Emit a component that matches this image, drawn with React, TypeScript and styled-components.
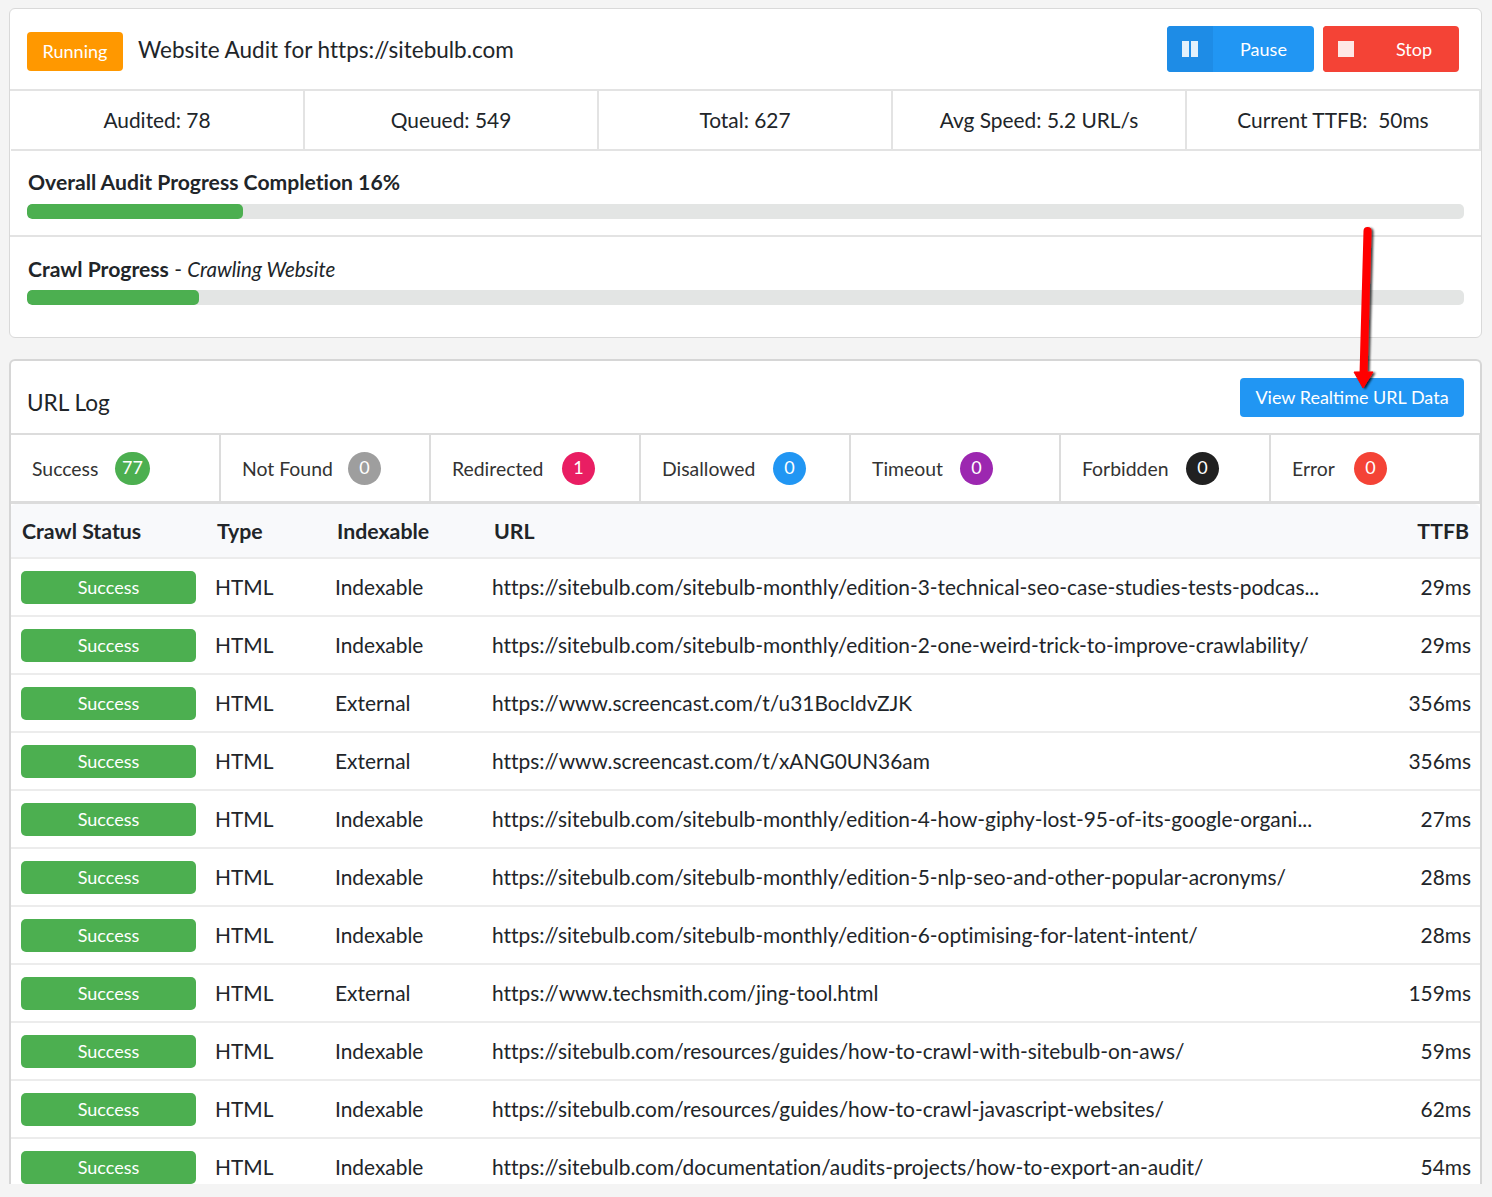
import React from "react";
import styled, { createGlobalStyle } from "styled-components";

const Global = createGlobalStyle`
    html, body {
        margin: 0;
        height: 1197px;
        overflow: hidden;
        background: #f4f4f4;
        font-family: "Lato", "Liberation Sans", sans-serif;
        font-variant-ligatures: none;
        color: #212529;
    }
    button {
        font-variant-ligatures: none;
    }
`;

const Page = styled.div`
    position: relative;
    box-sizing: border-box;
    height: 1197px;
    padding: 8px 10px 13px 9px;
    display: flex;
    flex-direction: column;
    gap: 21px;
`;

const Panel = styled.section<{ $fill?: boolean }>`
    background: #fff;
    border: 1px solid #d9d9d9;
    border-radius: 6px;
    overflow: hidden;
    ${(p) =>
        p.$fill
            ? `flex: 1; min-height: 0; border-width: 2px 2px 0 2px; border-color: #d6d6d6; border-bottom-left-radius: 0; border-bottom-right-radius: 0;`
            : `height: 330px; box-sizing: border-box; flex-shrink: 0;`}
`;

const Header = styled.header`
    height: 82px;
    box-sizing: border-box;
    padding: 0 22px 0 17px;
    display: flex;
    align-items: center;
    border-bottom: 2px solid #e3e3e3;
`;

const StatusLabel = styled.span`
    width: 96px;
    height: 39px;
    margin-top: 5px;
    padding-bottom: 2px;
    box-sizing: border-box;
    border-radius: 4px;
    background: #ff9800;
    color: #fff;
    font-size: 18px;
    display: flex;
    align-items: center;
    justify-content: center;
`;

const AuditTitle = styled.h1`
    margin: 0 0 0 15px;
    font-size: 22.5px;
    font-weight: 400;
    flex: 1;
`;

const ActionButton = styled.button<{ $bg: string; $width: number; $iconBg: string }>`
    width: ${(p) => p.$width}px;
    height: 46px;
    margin-left: 9px;
    padding: 0;
    border: 0;
    border-radius: 4px;
    overflow: hidden;
    background: ${(p) => p.$bg};
    color: #fff;
    font: 400 18px "Lato", sans-serif;
    display: flex;
    align-items: stretch;

    .icon {
        width: 46px;
        background: ${(p) => p.$iconBg};
        display: flex;
        align-items: center;
        justify-content: center;
    }

    .text {
        flex: 1;
        display: flex;
        align-items: center;
        justify-content: center;
    }
`;

const Stats = styled.div`
    display: grid;
    grid-template-columns: repeat(5, 294px);
    height: 60px;
    margin-left: 1px;
    border-bottom: 2px solid #e3e3e3;
    box-sizing: border-box;
`;

const Stat = styled.div`
    display: flex;
    align-items: center;
    justify-content: center;
    padding-bottom: 2px;
    font-size: 20.9px;
    border-right: 2px solid #e3e3e3;
`;

const Progress = styled.div<{ $divider?: boolean; $height: number; $top: number }>`
    height: ${(p) => p.$height}px;
    box-sizing: border-box;
    padding: ${(p) => p.$top}px 17px 0;
    ${(p) => p.$divider && `border-bottom: 2px solid #e3e3e3;`}
`;

const ProgressTitle = styled.div`
    font-size: 20.9px;
    line-height: 26px;
    font-weight: 400;
    padding-left: 1px;

    strong {
        font-size: 21.15px;
        font-weight: 700;
    }

    em {
        font-size: 20.5px;
        font-style: italic;
    }
`;

const Track = styled.div<{ $gap: number }>`
    height: 15px;
    margin-top: ${(p) => p.$gap}px;
    border-radius: 5px;
    background: #e3e5e4;
    overflow: hidden;
`;

const Fill = styled.div`
    height: 100%;
    border-radius: 5px;
    background: #4caf50;
`;

const LogHeader = styled.header`
    height: 74px;
    box-sizing: border-box;
    padding: 17px 16px 0 16px;
    display: flex;
    justify-content: space-between;
    align-items: flex-start;
    border-bottom: 2px solid #dcdcdc;
`;

const LogTitle = styled.h2`
    margin: 10px 0 0;
    font-size: 22.6px;
    line-height: 30px;
    font-weight: 400;
`;

const ViewButton = styled.button`
    width: 224px;
    height: 39px;
    border: 0;
    padding: 0 0 2px;
    border-radius: 4px;
    background: #2196f3;
    color: #fff;
    font: 400 18px "Lato", sans-serif;
`;

const Tabs = styled.div`
    display: grid;
    grid-template-columns: repeat(7, 210px);
    height: 69px;
    box-sizing: border-box;
    border-bottom: 3px solid #dcdcdc;
`;

const Tab = styled.div`
    display: flex;
    align-items: center;
    gap: 17px;
    padding-left: 21px;
    font-size: 19.4px;
    color: #333;
    border-right: 2px solid #dcdcdc;
`;

const TabLabel = styled.span<{ $width: number }>`
    width: ${(p) => p.$width}px;
    white-space: nowrap;
`;

const Count = styled.span<{ $bg: string; $wide?: boolean }>`
    min-width: ${(p) => (p.$wide ? 35 : 33)}px;
    height: 33px;
    border-radius: 17px;
    background: ${(p) => p.$bg};
    color: #fff;
    font-size: 18px;
    display: flex;
    align-items: center;
    justify-content: center;
    padding-bottom: 2px;
    box-sizing: border-box;
`;

const Row = styled.div`
    display: grid;
    grid-template-columns: 194px 120px 157px 1fr auto;
    align-items: center;
    height: 58px;
    box-sizing: border-box;
    padding: 0 9px 0 10px;
    font-size: 20.9px;
    border-bottom: 2px solid #ececec;
    white-space: nowrap;
`;

const HeadRow = styled(Row)`
    grid-template-columns: 195px 120px 157px 1fr auto;
    height: 55px;
    padding: 0 11px 0 12px;
    margin-left: -1px;
    background: #f8f9fb;
    font-weight: 700;
    font-size: 21.3px;
    border-radius: 6px 6px 0 0;
`;

const Cell = styled.span`
    margin-top: -2px;
`;

const Pill = styled.span`
    width: 175px;
    height: 33px;
    border-radius: 5px;
    background: #4caf50;
    color: #fff;
    font-size: 18px;
    display: flex;
    align-items: center;
    justify-content: center;
`;

const Arrow = styled.svg`
    position: absolute;
    left: 1340px;
    top: 220px;
    pointer-events: none;
`;

const tabs: [string, string, string, number][] = [
    ["Success", "77", "#4caf50", 66],
    ["Not Found", "0", "#9e9e9e", 89],
    ["Redirected", "1", "#e91e63", 93],
    ["Disallowed", "0", "#2196f3", 94],
    ["Timeout", "0", "#9c27b0", 71],
    ["Forbidden", "0", "#212121", 87],
    ["Error", "0", "#f44336", 45],
];

const rows: [string, string, string][] = [
    ["Indexable", "https://sitebulb.com/sitebulb-monthly/edition-3-technical-seo-case-studies-tests-podcas...", "29ms"],
    ["Indexable", "https://sitebulb.com/sitebulb-monthly/edition-2-one-weird-trick-to-improve-crawlability/", "29ms"],
    ["External", "https://www.screencast.com/t/u31BocIdvZJK", "356ms"],
    ["External", "https://www.screencast.com/t/xANG0UN36am", "356ms"],
    ["Indexable", "https://sitebulb.com/sitebulb-monthly/edition-4-how-giphy-lost-95-of-its-google-organi...", "27ms"],
    ["Indexable", "https://sitebulb.com/sitebulb-monthly/edition-5-nlp-seo-and-other-popular-acronyms/", "28ms"],
    ["Indexable", "https://sitebulb.com/sitebulb-monthly/edition-6-optimising-for-latent-intent/", "28ms"],
    ["External", "https://www.techsmith.com/jing-tool.html", "159ms"],
    ["Indexable", "https://sitebulb.com/resources/guides/how-to-crawl-with-sitebulb-on-aws/", "59ms"],
    ["Indexable", "https://sitebulb.com/resources/guides/how-to-crawl-javascript-websites/", "62ms"],
    ["Indexable", "https://sitebulb.com/documentation/audits-projects/how-to-export-an-audit/", "54ms"],
];

export default function App() {
    return (
        <Page>
            <Global />
            <Panel>
                <Header>
                    <StatusLabel>Running</StatusLabel>
                    <AuditTitle>Website Audit for https://sitebulb.com</AuditTitle>
                    <ActionButton $bg="#2196f3" $iconBg="#1e8ce6" $width={147}>
                        <span className="icon">
                            <svg width="16" height="16" viewBox="0 0 16 16">
                                <path d="M0 0h7v16H0zM9 0h7v16H9z" fill="#fff" opacity="0.88" />
                            </svg>
                        </span>
                        <span className="text">Pause</span>
                    </ActionButton>
                    <ActionButton $bg="#f44336" $iconBg="#f44336" $width={136}>
                        <span className="icon">
                            <svg width="16" height="16" viewBox="0 0 16 16">
                                <rect width="16" height="16" fill="#fff" opacity="0.88" />
                            </svg>
                        </span>
                        <span className="text">Stop</span>
                    </ActionButton>
                </Header>
                <Stats>
                    <Stat>Audited: 78</Stat>
                    <Stat>Queued: 549</Stat>
                    <Stat>Total: 627</Stat>
                    <Stat>Avg Speed: 5.2 URL/s</Stat>
                    <Stat>Current TTFB:&nbsp; 50ms</Stat>
                </Stats>
                <Progress $divider $height={86} $top={18}>
                    <ProgressTitle>
                        <strong>Overall Audit Progress Completion 16%</strong>
                    </ProgressTitle>
                    <Track $gap={9}>
                        <Fill style={{ width: "15%" }} />
                    </Track>
                </Progress>
                <Progress $height={98} $top={19}>
                    <ProgressTitle>
                        <strong>Crawl Progress</strong> - <em>Crawling Website</em>
                    </ProgressTitle>
                    <Track $gap={8}>
                        <Fill style={{ width: "12%" }} />
                    </Track>
                </Progress>
            </Panel>
            <Panel $fill>
                <LogHeader>
                    <LogTitle>URL Log</LogTitle>
                    <ViewButton>View Realtime URL Data</ViewButton>
                </LogHeader>
                <Tabs>
                    {tabs.map(([label, n, bg, width]) => (
                        <Tab key={label}>
                            <TabLabel $width={width}>{label}</TabLabel>
                            <Count $bg={bg} $wide={n.length > 1}>
                                {n}
                            </Count>
                        </Tab>
                    ))}
                </Tabs>
                <HeadRow>
                    <span>Crawl Status</span>
                    <span>Type</span>
                    <span>Indexable</span>
                    <span>URL</span>
                    <span>TTFB</span>
                </HeadRow>
                {rows.map(([idx, url, ttfb]) => (
                    <Row key={url}>
                        <Pill>Success</Pill>
                        <Cell>HTML</Cell>
                        <Cell>{idx}</Cell>
                        <Cell>{url}</Cell>
                        <Cell>{ttfb}</Cell>
                    </Row>
                ))}
            </Panel>
            <Arrow width="50" height="180" viewBox="0 0 50 180">
                <defs>
                    <filter id="arrowShadow" x="-50%" y="-10%" width="200%" height="120%">
                        <feDropShadow dx="2" dy="1" stdDeviation="1.2" floodColor="#000" floodOpacity="0.75" />
                    </filter>
                </defs>
                <g filter="url(#arrowShadow)">
                    <path d="M27.5 11 L23.5 155" stroke="#f00" strokeWidth="8" strokeLinecap="round" fill="none" />
                    <path d="M14 152 L33 152 L23 168 Z" fill="#f00" stroke="#f00" strokeLinejoin="round" />
                </g>
            </Arrow>
        </Page>
    );
}
